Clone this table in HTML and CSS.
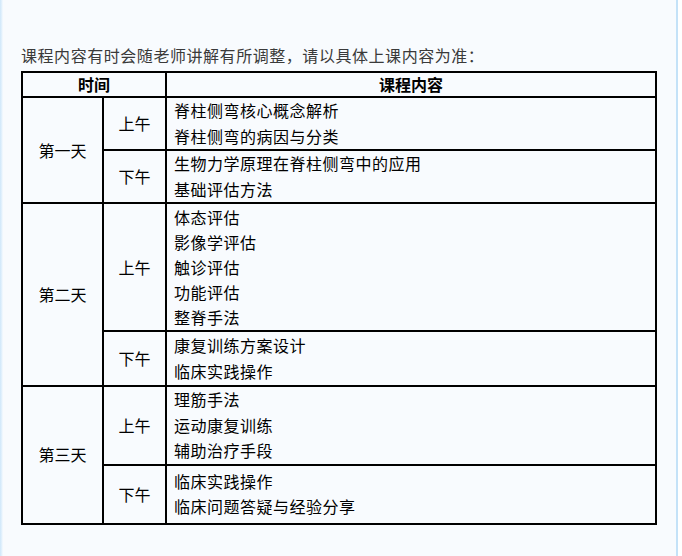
FILE: index.html
```html
<!DOCTYPE html>
<html lang="zh-CN">
<head>
<meta charset="utf-8">
<title>课程内容</title>
<link rel="stylesheet" href="styles.css">
</head>
<body>
<div class="page">
  <p class="note">课程内容有时会随老师讲解有所调整，请以具体上课内容为准：</p>
  <table class="schedule">
    <colgroup>
      <col class="c-day">
      <col class="c-half">
      <col class="c-content">
    </colgroup>
    <thead>
      <tr class="rh"><th colspan="2">时间</th><th>课程内容</th></tr>
    </thead>
    <tbody>
      <tr class="r2">
        <td rowspan="2" class="day">第一天</td>
        <td class="half">上午</td>
        <td class="content"><div>脊柱侧弯核心概念解析</div><div>脊柱侧弯的病因与分类</div></td>
      </tr>
      <tr class="r2">
        <td class="half">下午</td>
        <td class="content"><div>生物力学原理在脊柱侧弯中的应用</div><div>基础评估方法</div></td>
      </tr>
      <tr class="r5">
        <td rowspan="2" class="day">第二天</td>
        <td class="half">上午</td>
        <td class="content"><div>体态评估</div><div>影像学评估</div><div>触诊评估</div><div>功能评估</div><div>整脊手法</div></td>
      </tr>
      <tr class="r2b">
        <td class="half">下午</td>
        <td class="content"><div>康复训练方案设计</div><div>临床实践操作</div></td>
      </tr>
      <tr class="r3">
        <td rowspan="2" class="day">第三天</td>
        <td class="half">上午</td>
        <td class="content"><div>理筋手法</div><div>运动康复训练</div><div>辅助治疗手段</div></td>
      </tr>
      <tr class="r2c">
        <td class="half">下午</td>
        <td class="content"><div>临床实践操作</div><div>临床问题答疑与经验分享</div></td>
      </tr>
    </tbody>
  </table>
</div>
</body>
</html>
```

FILE: styles.css
```css
html, body {
  margin: 0;
  padding: 0;
  background: #ffffff;
}
body {
  font-family: "Noto Sans CJK SC", "Noto Sans", sans-serif;
  font-size: 16px;
  color: #000;
}
.page {
  width: 678px;
  height: 556px;
  box-sizing: border-box;
  padding: 43px 0 0 21px;
  background: linear-gradient(to right, #cfe7fa 0, #e6f3fd 2px, #f8fbfe 3px);
  border-right: 2px solid #c4e2f8;
}
.note {
  margin: 0 0 3px 0;
  line-height: 25px;
  color: #3a3a3a;
  font-size: 16px;
  letter-spacing: 0.55px;
}
.schedule {
  border-collapse: collapse;
  width: 634px;
  table-layout: fixed;
}
.c-day { width: 81px; }
.c-half { width: 63px; }
.c-content { width: 490px; }
.schedule th,
.schedule td {
  border: 2px solid #000;
  padding: 0;
  line-height: 25px;
}
.schedule th {
  font-weight: bold;
  text-align: center;
  line-height: 21px;
}
.day, .half {
  text-align: center;
  vertical-align: middle;
}
.content {
  padding: 0 0 0 7px !important;
  text-align: left;
  letter-spacing: 0.5px;
}
.content div { line-height: 25.5px; }
.r5 .content div { line-height: 25px; }
.rh { height: 25px; }
.r2 { height: 53px; }
.r5 { height: 128px; }
.r2b { height: 55px; }
.r3 { height: 78px; }
.r2c { height: 59px; }
```
